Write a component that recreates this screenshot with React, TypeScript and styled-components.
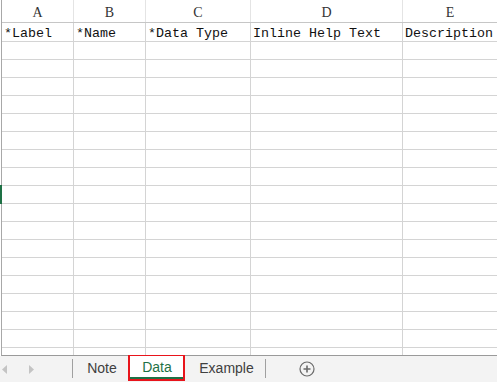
import React from 'react';
import styled, { createGlobalStyle } from 'styled-components';

const GlobalStyle = createGlobalStyle`
  html, body {
    margin: 0;
    padding: 0;
    background: #ffffff;
    overflow: hidden;
  }
`;

const Page = styled.div`
  width: 497px;
  height: 382px;
  display: flex;
  flex-direction: column;
  overflow: hidden;
  position: relative;
`;

// 表格区域
const Sheet = styled.div`
  height: 355px;
  margin-left: 1px;
  border-left: 1px solid #a8a8a8;
  border-bottom: 1px solid #9a9a9a;
  overflow: hidden;
  display: flex;
  flex-direction: column;
`;

const Row = styled.div<{ $h: number; $head?: boolean }>`
  display: grid;
  grid-template-columns: 72px 72px 105px 152px 1fr;
  height: ${p => p.$h}px;
  flex: none;
  box-sizing: border-box;
  border-bottom: 1px solid ${p => (p.$head ? '#c6c6c6' : '#d4d4d4')};
`;

const ColHead = styled.div<{ $last?: boolean }>`
  border-right: ${p => (p.$last ? 'none' : '1px solid #e4e4e4')};
  display: flex;
  align-items: flex-start;
  justify-content: center;
  padding-top: 5px;
  font-family: 'Liberation Serif', serif;
  font-size: 14px;
  line-height: 16px;
  color: #333;
`;

const Cell = styled.div<{ $last?: boolean }>`
  border-right: ${p => (p.$last ? 'none' : '1px solid #d4d4d4')};
  display: flex;
  align-items: flex-start;
  padding-left: 2px;
  padding-top: 3px;
  white-space: nowrap;
  overflow: hidden;
  font-family: 'Liberation Mono', monospace;
  font-size: 13.33px;
  line-height: 16px;
  color: #111;
`;

// 选中行标记
const RowMark = styled.div`
  position: absolute;
  left: 0;
  top: 185px;
  width: 2px;
  height: 19px;
  background: #1e7145;
`;

// 底部标签栏
const TabBar = styled.div`
  height: 26px;
  background: #f3f3f3;
  display: flex;
  align-items: stretch;
  font-family: 'Liberation Sans', Arial, sans-serif;
  font-size: 14px;
`;

const Nav = styled.div`
  width: 72px;
  display: flex;
  align-items: center;
  gap: 22px;
  padding-left: 2px;
  box-sizing: border-box;
`;

const Arrow = styled.svg`
  width: 5px;
  height: 9px;
`;

const Divider = styled.div`
  width: 1px;
  background: #a0a0a0;
  margin: 3px 0 4px;
`;

const Tab = styled.div<{ $w: number; $active?: boolean }>`
  width: ${p => p.$w}px;
  box-sizing: border-box;
  display: flex;
  align-items: center;
  justify-content: center;
  padding-left: ${p => (p.$active ? '1px' : '3px')};
  color: ${p => (p.$active ? '#1e7145' : '#404040')};
  background: ${p => (p.$active ? '#ffffff' : 'transparent')};
  border: ${p => (p.$active ? '2px solid #e8141b' : 'none')};
  border-top-width: 0;
  height: ${p => (p.$active ? '25px' : 'auto')};
  box-shadow: ${p => (p.$active ? 'inset 0 -2px 0 #1e7145' : 'none')};
  padding-bottom: ${p => (p.$active ? '1px' : '2px')};
`;

const ActiveWrap = styled.div`
  display: flex;
  flex-direction: column;
`;

const RedTop = styled.div`
  height: 1px;
  margin-top: -1px;
  background: #e8141b;
`;

const AddBtn = styled.div`
  margin-left: 33px;
  display: flex;
  align-items: center;
`;

const cols = ['A', 'B', 'C', 'D', 'E'];
const heads = ['*Label', '*Name', '*Data Type', 'Inline Help Text', 'Description'];

export default function App() {
  const rows = Array.from({ length: 18 }, (_, i) => i);
  return (
    <Page>
      <GlobalStyle />
      <Sheet>
        <Row $h={23} $head>
          {cols.map((c, i) => (
            <ColHead key={c} $last={i === 4}>{c}</ColHead>
          ))}
        </Row>
        <Row $h={19}>
          {heads.map((h, i) => (
            <Cell key={h} $last={i === 4}>{h}</Cell>
          ))}
        </Row>
        {rows.map(r => (
          <Row key={r} $h={18}>
            {cols.map((c, i) => (
              <Cell key={c} $last={i === 4} />
            ))}
          </Row>
        ))}
      </Sheet>
      <RowMark />
      <TabBar>
        <Nav>
          <Arrow viewBox="0 0 5 9">
            <path d="M5 0 L0 4.5 L5 9 Z" fill="#c4c4c4" />
          </Arrow>
          <Arrow viewBox="0 0 5 9">
            <path d="M0 0 L5 4.5 L0 9 Z" fill="#c4c4c4" />
          </Arrow>
        </Nav>
        <Divider />
        <Tab $w={55}>Note</Tab>
        <ActiveWrap>
          <RedTop />
          <Tab $w={57} $active>Data</Tab>
        </ActiveWrap>
        <Tab $w={80}>Example</Tab>
        <Divider />
        <AddBtn>
          <svg width="16" height="16" viewBox="0 0 16 16">
            <circle cx="8" cy="8" r="7" fill="none" stroke="#6a6a6a" strokeWidth="1.2" />
            <path d="M8 4.5 V11.5 M4.5 8 H11.5" stroke="#6a6a6a" strokeWidth="1.6" />
          </svg>
        </AddBtn>
      </TabBar>
    </Page>
  );
}
